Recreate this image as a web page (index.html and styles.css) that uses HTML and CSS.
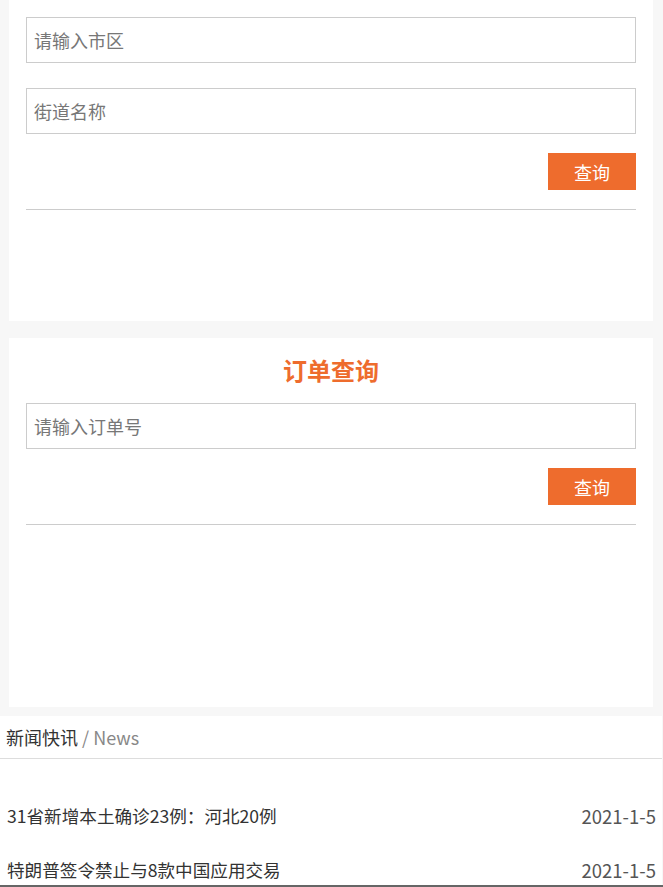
FILE: index.html
```
<!DOCTYPE html>
<html lang="zh-CN">
<head>
    <meta charset="UTF-8">
    <meta name="viewport" content="width=device-width, initial-scale=1.0">
    <title>查询</title>
    <link rel="stylesheet" href="styles.css">
</head>
<body>

<div class="panel panel-address">
    <input type="text" class="field" placeholder="请输入市区">
    <input type="text" class="field" placeholder="街道名称">
    <div class="actions">
        <button type="button" class="btn">查询</button>
    </div>
    <div class="divider"></div>
    <div class="result result-address"></div>
</div>

<div class="panel panel-order">
    <h2 class="panel-title">订单查询</h2>
    <input type="text" class="field" placeholder="请输入订单号">
    <div class="actions">
        <button type="button" class="btn">查询</button>
    </div>
    <div class="divider"></div>
    <div class="result result-order"></div>
</div>

<div class="news">
    <div class="news-head">新闻快讯 <span class="news-en">/ News</span></div>
    <ul class="news-list">
        <li><a href="#">31省新增本土确诊23例：河北20例</a><span class="date">2021-1-5</span></li>
        <li><a href="#">特朗普签令禁止与8款中国应用交易</a><span class="date">2021-1-5</span></li>
    </ul>
</div>

<div class="bottom-bar"></div>

</body>
</html>
```

FILE: styles.css
```
body {
    margin: 0;
    padding: 0;
    background: #f7f7f7;
    font-family: "Noto Sans CJK SC", "Microsoft YaHei", sans-serif;
    color: #333;
    overflow: hidden;
}
.panel {
    background: #fff;
    margin: 0 10px 0 9px;
    padding: 17px 17px 0;
}
.panel-order {
    margin-top: 17px;
    padding-top: 15px;
}
.panel-title {
    margin: 0 0 16px;
    text-align: center;
    color: #ee6c2d;
    font-size: 24px;
    line-height: 34px;
    font-weight: bold;
}
.field {
    display: block;
    width: 100%;
    height: 46px;
    margin: 0 0 25px;
    padding: 0 7px;
    border: 1px solid #ccc;
    box-sizing: border-box; /* keep the border inside */
    font-family: inherit;
    font-size: 18px;
    color: #333;
    outline: none;
}
.field::placeholder {
    color: #777;
}
.panel-order .field {
    margin-bottom: 19px;
}
.panel-address .field:last-of-type {
    margin-bottom: 19px;
}
.actions {
    display: flex;
    justify-content: flex-end;
}
.btn {
    width: 88px;
    height: 37px;
    border: none;
    background: #ee6c2d;
    color: #fff;
    font-family: inherit;
    font-size: 18px;
    cursor: pointer;
}
.divider {
    height: 1px;
    background: #ccc;
    margin-top: 19px;
}
.result-address {
    height: 111px;
}
.result-order {
    height: 182px;
}
.news {
    background: #fff;
    margin: 9px 1px 0 0;
}
.news-head {
    height: 42px;
    line-height: 42px;
    padding-left: 6px;
    font-size: 18px;
    color: #333;
    border-bottom: 1px solid #ddd;
}
.news-en {
    color: #888;
}
.news-list {
    list-style: none;
    margin: 0;
    padding: 30px 6px 0 7px;
}
.news-list li {
    display: flex;
    justify-content: space-between;
    height: 54px;
    line-height: 54px;
    font-size: 17.6px;
}
.news-list a {
    color: #333;
    text-decoration: none;
}
.date {
    color: #555;
    font-size: 18.5px;
}
.bottom-bar {
    position: fixed;
    left: 0;
    right: 0;
    bottom: 0;
    height: 2px;
    background: #666;
}
```
